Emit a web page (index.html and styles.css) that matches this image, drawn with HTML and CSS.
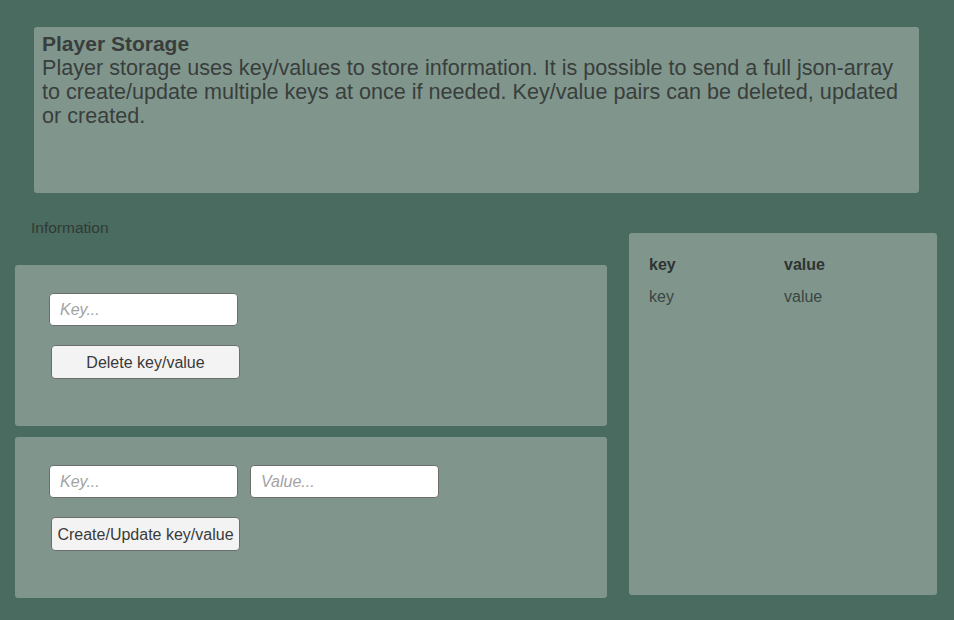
FILE: index.html
```html
<!DOCTYPE html>
<html>
<head>
<meta charset="utf-8">
<link rel="stylesheet" href="styles.css">
</head>
<body>
<div class="intro panel">
  <div class="intro-title">Player Storage</div>
  <div class="intro-text">Player storage uses key/values to store information. It is possible to send a full json-array to create/update multiple keys at once if needed. Key/value pairs can be deleted, updated or created.</div>
</div>
<div class="main">
  <div class="left">
    <div class="label">Information</div>
    <div class="panel box box-first">
      <div class="row">
        <input class="field" type="text" placeholder="Key...">
      </div>
      <button class="btn">Delete key/value</button>
    </div>
    <div class="panel box">
      <div class="row">
        <input class="field" type="text" placeholder="Key...">
        <input class="field" type="text" placeholder="Value...">
      </div>
      <button class="btn">Create/Update key/value</button>
    </div>
  </div>
  <div class="panel table">
    <div class="trow head"><span class="c1">key</span><span class="c2">value</span></div>
    <div class="trow"><span class="c1">key</span><span class="c2">value</span></div>
  </div>
</div>
</body>
</html>
```
FILE: styles.css
```css
html, body {
  margin: 0;
  padding: 0;
}
body {
  background: #4a6b5f;
  width: 954px;
  height: 620px;
  overflow: hidden;
  font-family: "Liberation Sans", Arial, sans-serif;
  color: #393e3c;
}
.panel {
  background: #80968d;
  border-radius: 3px;
  box-sizing: border-box;
}
.intro {
  margin: 27px 35px 0 34px;
  height: 166px;
  padding: 5px 10px 0 8px;
  font-size: 21.6px;
  line-height: 24px;
}
.intro-title {
  font-weight: bold;
  font-size: 21px;
}
.main {
  display: flex;
  gap: 22px;
  padding: 0 17px 0 15px;
  margin-top: 23px;
}
.left {
  width: 592px;
  display: flex;
  flex-direction: column;
}
.label {
  font-size: 15.5px;
  line-height: 20px;
  padding: 2px 0 0 16px;
  color: #2f3a35;
  margin-bottom: 27px;
}
.box {
  height: 161px;
  padding: 28px 0 0 34px;
}
.box + .box {
  margin-top: 11px;
}
.row {
  display: flex;
  gap: 12px;
}
.field {
  width: 189px;
  height: 33px;
  box-sizing: border-box;
  margin: 0;
  border: 1px solid #6b6e6d;
  border-radius: 4px;
  background: #fff;
  padding: 0 10px;
  font-family: "Liberation Sans", Arial, sans-serif;
  font-size: 16px;
  color: #333;
  outline: none;
}
.field::placeholder {
  color: #a3a3a3;
  font-style: italic;
}
.btn {
  display: block;
  margin: 19px 0 0 2px;
  width: 189px;
  height: 34px;
  box-sizing: border-box;
  border: 1px solid #6b6e6d;
  border-radius: 4px;
  background: #f3f3f3;
  font-family: "Liberation Sans", Arial, sans-serif;
  font-size: 16px;
  color: #3a3a3a;
  padding: 2px 0 0 0;
  white-space: nowrap;
}
.table {
  width: 308px;
  height: 362px;
  margin-top: 17px;
  padding: 21px 20px 0 20px;
  font-size: 16px;
}
.trow {
  display: flex;
  height: 32px;
  line-height: 22px;
}
.trow.head {
  font-weight: bold;
  color: #2f3331;
}
.trow .c1 {
  width: 135px;
}
.trow:not(.head) {
  color: #3b4541;
}
```
